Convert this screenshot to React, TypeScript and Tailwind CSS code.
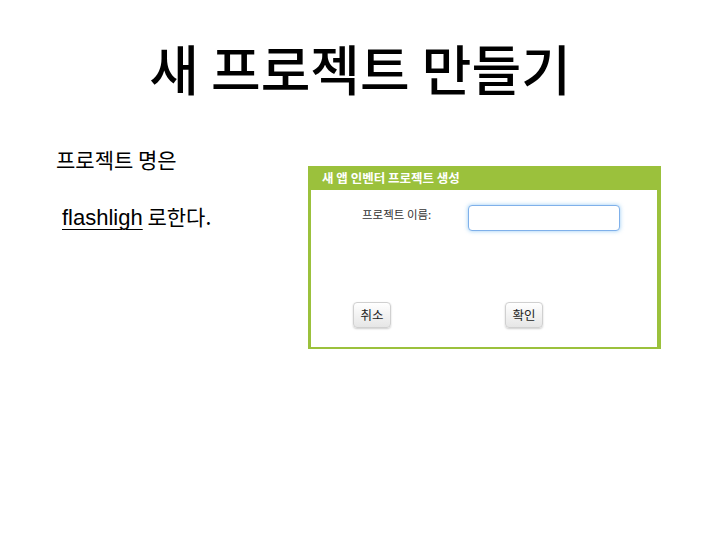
export default function App() {
  const kr = { fontFamily: '"Noto Sans CJK KR", "Noto Sans", sans-serif' };
  return (
    <div className="w-[720px] h-[540px] bg-white overflow-hidden text-black" style={kr}>
      <div className="pt-[33px] h-[140px] text-center text-[54px] leading-[70px] font-medium">
        새 프로젝트 만들기
      </div>
      <div className="flex">
        <div className="w-[308px] pl-[56px] pt-[4px] text-[21px] leading-[30px]">
          <div>프로젝트 명은</div>
          <div className="mt-[27px] pl-[6px]">
            <span className="underline underline-offset-[4px] decoration-1 text-[22px]" style={{ fontFamily: '"Liberation Sans", Arial, sans-serif' }}>flashligh</span>
            <span> 로한다.</span>
          </div>
        </div>
        <div className="mt-[26px] w-[353px] h-[183px] flex flex-col bg-[#9bc13c]">
          <div className="h-[24px] pl-[14px] flex items-center text-white font-bold text-[12.5px]">
            새 앱 인벤터 프로젝트 생성
          </div>
          <div className="flex-1 ml-[3px] mr-[4px] mb-[2px] bg-white flex flex-col">
            <div className="flex mt-[15px] pl-[51px]">
              <div className="w-[106px] pt-[1px] text-[11.5px] leading-[16px] text-[#333]">프로젝트 이름:</div>
              <div className="w-[152px] h-[26px] rounded-[4px] border border-[#7fb0ea] shadow-[0_0_4px_rgba(82,168,236,0.6)] bg-white"></div>
            </div>
            <div className="flex mt-[71px] pl-[42px]">
              <div className="w-[38px] h-[26px] rounded-[4px] border border-[#d0d0d0] bg-gradient-to-b from-white to-[#e6e6e6] shadow-[0_1px_2px_rgba(0,0,0,0.2)] flex items-center justify-center text-[12.5px] text-[#222]">
                취소
              </div>
              <div className="ml-[114px] w-[38px] h-[26px] rounded-[4px] border border-[#d0d0d0] bg-gradient-to-b from-white to-[#e6e6e6] shadow-[0_1px_2px_rgba(0,0,0,0.2)] flex items-center justify-center text-[12.5px] text-[#222]">
                확인
              </div>
            </div>
          </div>
        </div>
      </div>
    </div>
  );
}
